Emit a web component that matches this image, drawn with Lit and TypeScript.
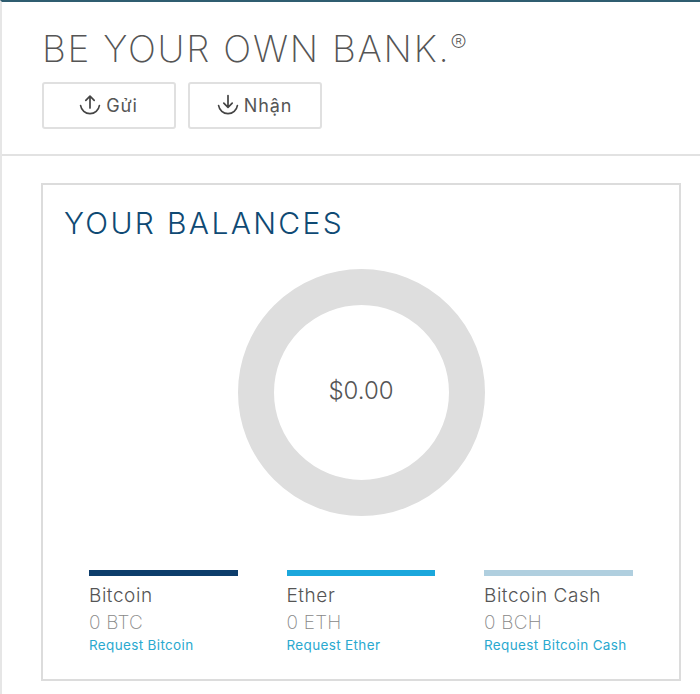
import { LitElement, html, css, svg } from 'lit';
import { customElement } from 'lit/decorators.js';

const upIcon = svg`<path d="M12 15V3.5M7.8 7.4 12 3.2l4.2 4.2"/><path d="M2.6 12.5a9.5 9.5 0 0 0 18.8 0"/>`;
const downIcon = svg`<path d="M12 2.5V14M7.8 10.1 12 14.3l4.2-4.2"/><path d="M2.6 12.5a9.5 9.5 0 0 0 18.8 0"/>`;

const balances = [
  { name: 'Bitcoin', amount: '0 BTC', link: 'Request Bitcoin', color: '#0d3d6b' },
  { name: 'Ether', amount: '0 ETH', link: 'Request Ether', color: '#1ba7dc' },
  { name: 'Bitcoin Cash', amount: '0 BCH', link: 'Request Bitcoin Cash', color: '#b0cfdf' },
];

@customElement('app-root')
export class AppRoot extends LitElement {
  static styles = css`
    :host {
      display: block;
      width: 700px;
      height: 694px;
      overflow: hidden;
      box-sizing: border-box;
      background: #fff;
      border-top: 2px solid #2f5d70;
      border-left: 2px solid #e6e6e6;
      font-family: Inter, 'Noto Sans', sans-serif;
      color: #555;
    }
    .header {
      height: 154px;
      box-sizing: border-box;
      padding: 25px 0 0 40px;
      border-bottom: 2px solid #e2e2e2;
    }
    h1 {
      margin: 0;
      font-size: 37px;
      line-height: 44px;
      font-weight: 200;
      letter-spacing: 1.75px;
      color: #555;
      white-space: nowrap;
    }
    h1 sup {
      font-size: 24px;
      line-height: 0;
      vertical-align: 10px;
      letter-spacing: 0;
    }
    .actions {
      display: flex;
      gap: 12px;
      margin-top: 11px;
    }
    .btn {
      width: 134px;
      height: 47px;
      box-sizing: border-box;
      border: 2px solid #e0e0e0;
      border-radius: 3px;
      display: flex;
      align-items: center;
      justify-content: center;
      gap: 4px;
      padding-right: 2px;
      font-size: 18px;
      font-weight: 400;
      letter-spacing: 0.9px;
      color: #555;
    }
    .btn svg {
      width: 24px;
      height: 24px;
      margin-top: -2px;
      fill: none;
      stroke: #444;
      stroke-width: 1.7;
      stroke-linecap: round;
      stroke-linejoin: round;
    }
    .card {
      width: 640px;
      height: 498px;
      box-sizing: border-box;
      margin: 27px 0 0 39px;
      border: 2px solid #dcdcdc;
      padding: 20px 21px 0;
    }
    h2 {
      margin: 0;
      font-size: 30px;
      line-height: 36px;
      font-weight: 350;
      letter-spacing: 2.35px;
      color: #0f4a74;
      white-space: nowrap;
    }
    .chart {
      display: flex;
      justify-content: center;
      margin: 28px 0 0 0;
    }
    .donut {
      width: 247px;
      height: 247px;
      box-sizing: border-box;
      border-radius: 50%;
      border: 36px solid #dedede;
      padding-bottom: 4px;
      display: flex;
      align-items: center;
      justify-content: center;
      font-size: 24px;
      font-weight: 300;
      color: #555;
    }
    .legend {
      display: grid;
      grid-template-columns: repeat(3, 148.5px);
      column-gap: 49px;
      margin: 54px 0 0 25px;
    }
    .bar {
      height: 6px;
    }
    .name {
      margin-top: 8px;
      font-size: 19px;
      line-height: 24px;
      font-weight: 300;
      letter-spacing: 0.55px;
      color: #555;
    }
    .amount {
      margin-top: 3px;
      font-size: 19px;
      line-height: 24px;
      font-weight: 200;
      letter-spacing: 0.2px;
      color: #888;
    }
    .link {
      display: block;
      margin-top: 1px;
      font-size: 13.5px;
      line-height: 18px;
      letter-spacing: 0.35px;
      color: #2aa9cf;
      text-decoration: none;
      white-space: nowrap;
    }
  `;

  render() {
    return html`
      <div class="header">
        <h1>BE YOUR OWN BANK.<sup>®</sup></h1>
        <div class="actions">
          <div class="btn"><svg viewBox="0 0 24 24">${upIcon}</svg>Gửi</div>
          <div class="btn"><svg viewBox="0 0 24 24">${downIcon}</svg>Nhận</div>
        </div>
      </div>
      <div class="card">
        <h2>YOUR BALANCES</h2>
        <div class="chart"><div class="donut">$0.00</div></div>
        <div class="legend">
          ${balances.map(
            (b) => html`
              <div>
                <div class="bar" style="background:${b.color}"></div>
                <div class="name">${b.name}</div>
                <div class="amount">${b.amount}</div>
                <a class="link">${b.link}</a>
              </div>
            `
          )}
        </div>
      </div>
    `;
  }
}
